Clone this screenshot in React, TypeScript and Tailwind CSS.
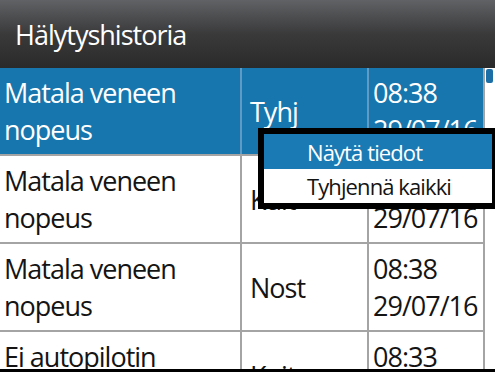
const rows = [
  { name: ["Matala veneen", "nopeus"], action: "Tyhj", time: ["08:38", "29/07/16"], active: true },
  { name: ["Matala veneen", "nopeus"], action: "Kuit", time: ["08:38", "29/07/16"], active: false },
  { name: ["Matala veneen", "nopeus"], action: "Nost", time: ["08:38", "29/07/16"], active: false },
  { name: ["Ei autopilotin", "yhteyttä"], action: "Kuit", time: ["08:33", "29/07/16"], active: false },
];

function AlarmRow({ row }: { row: (typeof rows)[number] }) {
  const line = row.active ? "border-[#5f9bc4]" : "border-[#a4a4a4]";
  return (
    <div
      className={`flex h-[88px] shrink-0 border-b-2 border-[#a4a4a4] text-[27px] leading-[37px] tracking-[-1px] ${
        row.active ? "bg-[#1776ad] text-white" : "bg-white text-[#141414]"
      }`}
    >
      <div className={`flex w-[242px] shrink-0 flex-col justify-center border-r-2 pl-[4px] ${line}`}>
        {row.name.map((t) => (
          <span key={t}>{t}</span>
        ))}
      </div>
      <div className={`flex w-[127px] shrink-0 items-center overflow-hidden border-r-2 pl-[8px] ${line}`}>
        {row.action}
      </div>
      <div className="flex flex-1 flex-col justify-center pl-[4px]">
        {row.time.map((t) => (
          <span key={t}>{t}</span>
        ))}
      </div>
    </div>
  );
}

export default function App() {
  return (
    <div
      className="relative flex h-[372px] w-[495px] flex-col overflow-hidden border-b-[3px] border-black bg-white font-medium"
      style={{ fontFamily: '"Open Sans", "Noto Sans", sans-serif' }}
    >
      <div className="flex h-[68px] shrink-0 items-center bg-gradient-to-b from-[#606265] via-[#3a3a3b] to-[#2a2a2a] pl-[15px] text-[27px] leading-none tracking-[-1px] text-white">
        Hälytyshistoria
      </div>

      <div className="flex min-h-0 flex-1">
        <div className="flex w-[483px] flex-col overflow-hidden">
          {rows.map((r, i) => (
            <AlarmRow key={i} row={r} />
          ))}
        </div>
        <div className="w-[12px] border-l-2 border-[#a4a4a4] bg-white pt-[1px] pl-[1px]">
          <div className="h-[14px] w-[7px] rounded-[2px] bg-[#1c6fa6]" />
        </div>
      </div>

      {/* context menu */}
      <div className="absolute left-[258px] top-[128px] w-[240px] border-[6px] border-black text-[22px] leading-none tracking-[-0.9px]">
        <div className="flex h-[35px] items-center bg-[#1a7ab3] pl-[43px] text-white">Näytä tiedot</div>
        <div className="flex h-[34px] items-center bg-white pl-[43px] text-[#141414]">Tyhjennä kaikki</div>
      </div>
    </div>
  );
}
